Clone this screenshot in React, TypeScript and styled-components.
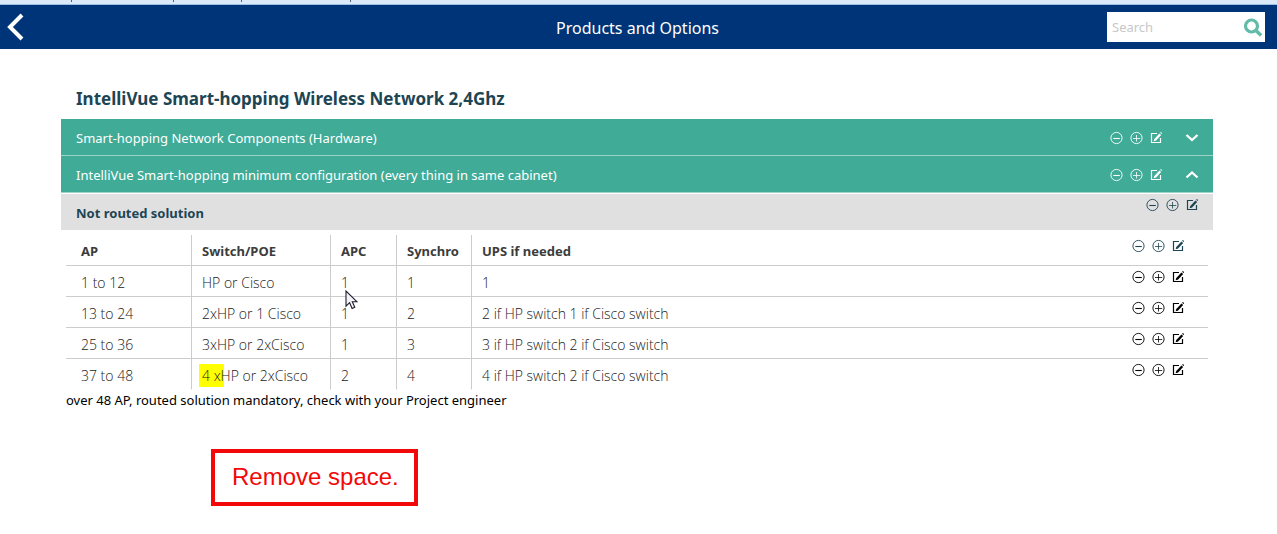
import React from "react";
import styled, { createGlobalStyle } from "styled-components";

const GlobalStyle = createGlobalStyle`
  *, *::before, *::after { box-sizing: border-box; }
  body {
    margin: 0;
    background: #fff;
    color: #000;
    font: 13px/20px "Noto Sans", "Open Sans", sans-serif;
  }
`;

const BrowserStrip = styled.div`
  display: flex;
  height: 5px;
  padding-left: 71px;
  background: #dbe9f8;
  border-bottom: 1px solid #9dbfe4;
`;

const StripTick = styled.span<{ $gap: number }>`
  width: 1px;
  height: 2px;
  margin-right: ${(p) => p.$gap}px;
  background: #55606c;
`;

const Header = styled.header`
  display: grid;
  grid-template-columns: 1fr auto 1fr;
  align-items: center;
  height: 44px;
  padding: 0 12px 0 6px;
  background: #003478;
  color: #fff;
`;

const BackButton = styled.button`
  display: flex;
  justify-self: start;
  padding: 0;
  border: 0;
  background: none;
  color: inherit;
`;

const PageTitle = styled.h1`
  margin: 0;
  padding: 2px 0 0 4px;
  font-size: 16px;
  line-height: 24px;
  font-weight: 400;
`;

const SearchForm = styled.form`
  display: flex;
  align-items: center;
  justify-self: end;
  width: 158px;
  height: 30px;
  padding: 0 3px 0 5px;
  background: #fff;
`;

const SearchInput = styled.input`
  flex: 1;
  min-width: 0;
  padding: 0;
  border: 0;
  outline: 0;
  background: none;
  font: 13px/20px "Noto Sans", "Open Sans", sans-serif;
  &::placeholder { color: #c8c8c8; opacity: 1; }
`;

const SearchButton = styled.button`
  display: flex;
  padding: 0;
  border: 0;
  background: none;
  color: #62baa9;
`;

const Main = styled.main`
  padding: 37px 64px 0 61px;
`;

const SectionTitle = styled.h2`
  margin: 0 0 7px;
  padding-left: 15px;
  color: #1d4554;
  font-size: 17px;
  line-height: 26px;
  font-weight: 700;
`;

const AccordionRow = styled.div`
  display: flex;
  align-items: center;
  height: 37px;
  padding: 2px 14px 0 15px;
  border-bottom: 1px solid #9bd3c7;
  background: #40ab97;
  color: #fff;
`;

const AccordionLabel = styled.span`
  flex: 1;
`;

const ExpandButton = styled.button`
  display: flex;
  margin-left: 22px;
  padding: 0;
  border: 0;
  background: none;
  color: inherit;
`;

const GroupRow = styled.div`
  display: flex;
  justify-content: space-between;
  height: 36px;
  margin-top: 1px;
  padding: 4px 14px 0 15px;
  background: #e0e0e0;
  color: #1d4554;
`;

const GroupTitle = styled.h3`
  margin: 0;
  padding-top: 5px;
  font-size: 13px;
  line-height: 20px;
  font-weight: 700;
`;

const Actions = styled.div`
  display: flex;
  gap: 6px;
  height: 14px;
`;

const ActionButton = styled.button`
  display: flex;
  padding: 0;
  border: 0;
  background: none;
  color: inherit;
`;

const TableWrap = styled.div`
  padding: 5px 5px 0;
`;

const Table = styled.table`
  width: 100%;
  border-collapse: separate;
  border-spacing: 0;
  table-layout: fixed;
  color: #3c3c3c;
`;

const HeadCell = styled.th`
  height: 31px;
  padding: 2px 0 0 10px;
  border-bottom: 1px solid #ccc;
  border-left: 1px solid #ccc;
  text-align: left;
  font-weight: 700;
  &:first-child { padding-left: 15px; border-left: 0; }
`;

const Cell = styled.td`
  height: 31px;
  padding: 4px 0 0 10px;
  border-bottom: 1px solid #ccc;
  border-left: 1px solid #ccc;
  color: #222;
  font: 300 14px/20px "Open Sans", "Noto Sans", sans-serif;
  &:first-child { padding-left: 15px; border-left: 0; }
  tbody > tr:last-child > & { border-bottom-color: transparent; }
`;

const ActionsCell = styled(Cell)<{ $color: string }>`
  padding: 4px 23px 0 0;
  border-left: 0;
  vertical-align: top;
  color: ${(p) => p.$color};
  & > div { justify-content: flex-end; }
`;

const Highlight = styled.mark`
  margin: 0 -3px;
  padding: 2px 3px;
  background: #ff0;
  color: inherit;
`;

const Pointed = styled.span`
  position: relative;
`;

const Cursor = styled.svg`
  position: absolute;
  left: 4px;
  top: 17px;
  z-index: 1;
`;

const Footnote = styled.p`
  margin: 0;
  padding-left: 5px;
`;

const Note = styled.aside`
  width: fit-content;
  margin: 39px 0 0 150px;
  padding: 10px 15px 11px 17px;
  border: 4px solid #f20808;
  color: #f20808;
  font: 24px/28px "Liberation Sans", Arial, sans-serif;
`;

function MinusIcon() {
  return (
    <svg width="14" height="14" viewBox="0 0 14 14" fill="none" stroke="currentColor">
      <circle cx="7.5" cy="7" r="5.6" strokeWidth="0.9" />
      <path d="M4.3 7.5h6.5" strokeWidth="1.1" />
    </svg>
  );
}

function PlusIcon() {
  return (
    <svg width="14" height="14" viewBox="0 0 14 14" fill="none" stroke="currentColor">
      <circle cx="7.5" cy="7" r="5.6" strokeWidth="0.9" />
      <path d="M4 7.5h7.2M7.5 4v6.5" strokeWidth="0.8" />
    </svg>
  );
}

function EditIcon() {
  return (
    <svg width="14" height="14" viewBox="0 0 14 14" fill="none" stroke="currentColor">
      <path d="M8 2.5H2.5v9h9V7" strokeWidth="1.2" />
      <path d="M6 9L11.3 3.2" strokeWidth="2.4" />
      <path d="M4.6 10.3l.7-2.5 1.8 1.7z" fill="currentColor" stroke="none" />
      <path d="M11 1.8L12 1l1.2 1.2-.7.9z" fill="currentColor" stroke="none" />
    </svg>
  );
}

function RowActions() {
  return (
    <Actions>
      <ActionButton type="button" aria-label="Remove"><MinusIcon /></ActionButton>
      <ActionButton type="button" aria-label="Add"><PlusIcon /></ActionButton>
      <ActionButton type="button" aria-label="Edit"><EditIcon /></ActionButton>
    </Actions>
  );
}

function Accordion({ label, open }: { label: string; open: boolean }) {
  return (
    <AccordionRow>
      <AccordionLabel>{label}</AccordionLabel>
      <RowActions />
      <ExpandButton type="button" aria-expanded={open} aria-label={open ? "Collapse" : "Expand"}>
        <svg width="14" height="14" viewBox="0 0 14 14" fill="none" stroke="currentColor" strokeWidth="2.3">
          <path d={open ? "M1.5 9.5L7 4.5l5.5 5" : "M1.5 4l5.5 5L12.5 4"} />
        </svg>
      </ExpandButton>
    </AccordionRow>
  );
}

const ROWS: React.ReactNode[][] = [
  [
    "1 to 12",
    "HP or Cisco",
    <Pointed key="apc">
      1
      <Cursor width="13" height="20" viewBox="0 0 13 20" aria-hidden="true">
        <path
          d="M1 1v15.2l3.6-3.5 2.5 5.8 2.7-1.2-2.5-5.6h4.6z"
          fill="#f4f4f8"
          stroke="#1c1c2c"
          strokeWidth="1.1"
        />
      </Cursor>
    </Pointed>,
    "1",
    "1",
  ],
  ["13 to 24", "2xHP or 1 Cisco", "1", "2", "2 if HP switch 1 if Cisco switch"],
  ["25 to 36", "3xHP or 2xCisco", "1", "3", "3 if HP switch 2 if Cisco switch"],
  [
    "37 to 48",
    <React.Fragment key="switch"><Highlight>4 x</Highlight>HP or 2xCisco</React.Fragment>,
    "2",
    "4",
    "4 if HP switch 2 if Cisco switch",
  ],
];

export default function App() {
  return (
    <>
      <GlobalStyle />
      <BrowserStrip>
        <StripTick $gap={101} />
        <StripTick $gap={67} />
        <StripTick $gap={108} />
        <StripTick $gap={0} />
      </BrowserStrip>
      <Header>
        <BackButton type="button" aria-label="Back">
          <svg width="18" height="30" viewBox="0 0 18 30" fill="none" stroke="currentColor" strokeWidth="4">
            <path d="M16 3L4 15l12 12" />
          </svg>
        </BackButton>
        <PageTitle>Products and Options</PageTitle>
        <SearchForm role="search">
          <SearchInput type="search" placeholder="Search" aria-label="Search" />
          <SearchButton type="button" aria-label="Run search">
            <svg width="19" height="19" viewBox="0 0 19 19" fill="none" stroke="currentColor">
              <circle cx="8.5" cy="8" r="6" strokeWidth="3.2" />
              <path d="M12.5 12l5.5 5.5" strokeWidth="3.4" />
            </svg>
          </SearchButton>
        </SearchForm>
      </Header>
      <Main>
        <SectionTitle>IntelliVue Smart-hopping Wireless Network 2,4Ghz</SectionTitle>
        <Accordion label="Smart-hopping Network Components (Hardware)" open={false} />
        <Accordion label="IntelliVue Smart-hopping minimum configuration (every thing in same cabinet)" open />
        <GroupRow>
          <GroupTitle>Not routed solution</GroupTitle>
          <RowActions />
        </GroupRow>
        <TableWrap>
          <Table>
            <colgroup>
              <col style={{ width: 125 }} />
              <col style={{ width: 139 }} />
              <col style={{ width: 66 }} />
              <col style={{ width: 75 }} />
              <col />
              <col style={{ width: 90 }} />
            </colgroup>
            <thead>
              <tr>
                <HeadCell scope="col">AP</HeadCell>
                <HeadCell scope="col">Switch/POE</HeadCell>
                <HeadCell scope="col">APC</HeadCell>
                <HeadCell scope="col">Synchro</HeadCell>
                <HeadCell scope="col">UPS if needed</HeadCell>
                <ActionsCell $color="#1d4554"><RowActions /></ActionsCell>
              </tr>
            </thead>
            <tbody>
              {ROWS.map((row, i) => (
                <tr key={i}>
                  {row.map((value, j) => (
                    <Cell key={j}>{value}</Cell>
                  ))}
                  <ActionsCell $color="#000"><RowActions /></ActionsCell>
                </tr>
              ))}
            </tbody>
          </Table>
        </TableWrap>
        <Footnote>over 48 AP, routed solution mandatory, check with your Project engineer</Footnote>
        <Note>Remove space.</Note>
      </Main>
    </>
  );
}
